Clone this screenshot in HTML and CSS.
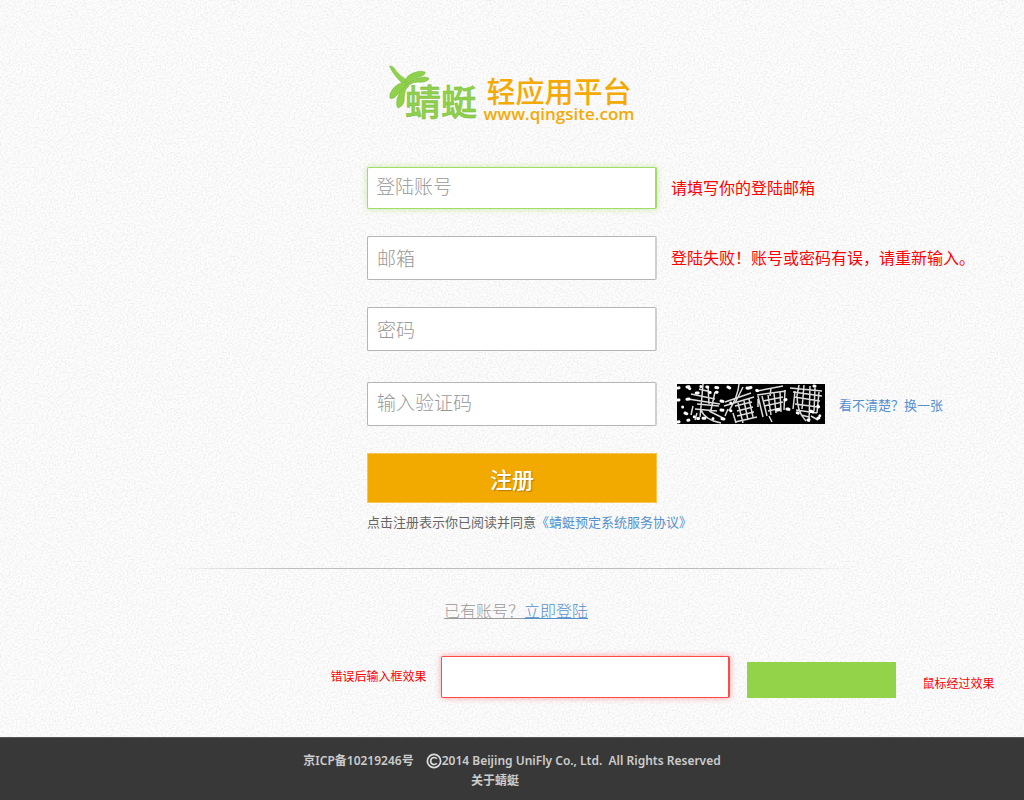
FILE: index.html
```html
<!DOCTYPE html>
<html lang="zh-CN">
<head>
<meta charset="utf-8">
<title>蜻蜓 轻应用平台 - 注册</title>
<link rel="stylesheet" href="styles.css">
</head>
<body>
<main class="page">
  <header class="brand">
    <svg class="dragonfly" viewBox="0 0 90 56" role="img" aria-label="蜻蜓">
      <g fill="#8fd14a" stroke="#78ba40" stroke-width=".6" stroke-linejoin="round">
        <path d="M.5 1Q3 .5 5 3Q10 11 18 15L20 19L16 21Q4 10 .5 1Z"/>
        <path d="M16 16Q18 10 24 8Q31 5 36 7Q37 9 33 11Q26 13 20 17Z"/>
        <path d="M19 18Q26 13 35 12Q40 12 40 14Q36 18 29 17Q24 17 20 20Z"/>
        <path d="M16 17Q8 18 3 25Q0 30 1 33Q4 35 8 30Q14 25 17 20Z"/>
        <path d="M18 19Q10 26 8 34Q7 41 9 43Q13 42 15 37Q15 31 16 27Q17 23 20 21Z"/>
      </g>
      <text class="brand-mark" x="16" y="51">蜻蜓</text>
    </svg>
    <div class="brand-text">
      <span class="brand-name">轻应用平台</span>
      <span class="brand-url">www.qingsite.com</span>
    </div>
  </header>

  <form class="form">
    <div class="row">
      <input class="field field-active" type="text" placeholder="登陆账号" aria-label="登陆账号">
      <p class="error">请填写你的登陆邮箱</p>
    </div>
    <div class="row">
      <input class="field" type="email" placeholder="邮箱" aria-label="邮箱">
      <p class="error">登陆失败！账号或密码有误，请重新输入。</p>
    </div>
    <div class="row">
      <input class="field" type="password" placeholder="密码" aria-label="密码">
    </div>
    <div class="row row-code">
      <input class="field" type="text" placeholder="输入验证码" aria-label="输入验证码">
      <div class="captcha">
        <svg class="captcha-image" viewBox="0 0 148 40" role="img" aria-label="验证码">
          <rect width="148" height="40" fill="#000"/>
          <g fill="none" stroke="#ddd" stroke-width="1.5">
            <path d="M26 0L25 12L23 33M31 2L32 20M14 10L38 15M11 15L43 20M20 20L42 22M18 25L40 27M22 5L34 8M24 26Q28 36 44 39M32 27L46 34M16 22L14 31M20 29L18 36M38 8L34 26"/>
            <path d="M62 0Q61 12 52 27M66 3L58 19M48 18L74 9M47 22L77 13M58 22L75 18M60 27L76 23M60 32L77 28M58 38L80 33M61 19L66 39M67 17L71 36M72 15L76 33M56 29L59 39M51 25L48 32"/>
            <path d="M80 7L106 2M80 11L109 7M81 12L86 33M85 12L90 32M91 11L94 31M97 9L99 29M103 8L104 28M108 6L107 26M86 17L106 13M87 22L106 18M91 27L104 24M94 4L93 12M81 15L81 23M92 32L95 38"/>
            <path d="M122 1L120 12Q120 28 129 37M127 1L125 25M133 2L132 38M138 4L137 27M142 8L140 29M116 8L145 12M117 13L143 17M118 20L141 23M119 26L140 29M118 7L116 25M113 4L145 7M124 31L132 33M134 32L141 36"/>
          </g>
          <g fill="none" stroke="#fff" stroke-width="3" stroke-linecap="round">
            <path stroke-dasharray="1 8 2 12 0 6" d="M1 4L18 2L44 4M1 16L13 15L7 22L2 26M12 4L18 9L47 8"/>
            <path stroke-dasharray="2 8 0 9" d="M8 29L20 34L50 35M44 17L54 19M44 26L56 27M51 3L58 7M72 4L79 2M100 26L118 24M134 27L147 34"/>
            <path stroke-dasharray="1 9" d="M70 4L82 7M108 16L116 13M111 25L126 31M137 2L146 4M1 38L24 34M131 36L147 33M141 22L146 29"/>
          </g>
        </svg>
        <a class="link captcha-link" href="#">看不清楚？换一张</a>
      </div>
    </div>
    <div class="row">
      <button class="submit" type="submit">注册</button>
    </div>
    <div class="row">
      <p class="terms">点击注册表示你已阅读并同意<a class="link" href="#">《蜻蜓预定系统服务协议》</a></p>
    </div>
  </form>

  <hr class="divider">

  <p class="login">已有账号？<a class="login-link" href="#">立即登陆</a></p>

  <section class="states">
    <label class="state-label" for="error-field">错误后输入框效果</label>
    <input class="field field-error" id="error-field" type="text">
    <button class="hover-swatch" type="button" aria-labelledby="hover-label"></button>
    <span class="state-label hover-label" id="hover-label">鼠标经过效果</span>
  </section>
</main>

<footer class="footer">
  <p class="footer-line"><span>京ICP备10219246号</span><span class="copyright"><svg class="copy-icon" viewBox="0 0 16 16" aria-hidden="true"><circle cx="8" cy="8" r="6.6"/><path d="M10.8 5.7A3.5 3.5 0 1 0 10.8 10.3"/></svg>2014 Beijing UniFly Co., Ltd.&nbsp; All Rights Reserved</span></p>
  <p class="footer-line footer-about"><a class="footer-link" href="#">关于蜻蜓</a></p>
</footer>
</body>
</html>
```
FILE: styles.css
```css
* {
  box-sizing: border-box;
}

body {
  display: flex;
  flex-direction: column;
  min-height: 100vh;
  margin: 0;
  overflow-x: hidden;
  background-color: #fdfdfd;
  background-image: url("data:image/svg+xml,%3Csvg xmlns='http://www.w3.org/2000/svg' width='256' height='256'%3E%3Cfilter id='n' x='0' y='0' width='100%25' height='100%25' color-interpolation-filters='sRGB'%3E%3CfeTurbulence type='fractalNoise' baseFrequency='.55' numOctaves='2' stitchTiles='stitch'/%3E%3CfeColorMatrix values='0 0 0 0 .5 0 0 0 0 .5 0 0 0 0 .5 .3 0 0 0 -.12'/%3E%3C/filter%3E%3Crect width='256' height='256' filter='url(%23n)'/%3E%3C/svg%3E");
  color: #666;
  font-family: "Liberation Sans", "Noto Sans CJK SC", sans-serif;
  font-size: 13px;
}

p {
  margin: 0;
}

.page {
  flex: 1;
  display: flex;
  flex-direction: column;
  padding-top: 65px;
}

.brand {
  display: flex;
  justify-content: center;
  gap: 4px;
  height: 63px;
}

.dragonfly {
  width: 90px;
  height: 56px;
  overflow: visible;
}

.brand-mark {
  fill: #8fd14a;
  stroke: #78ba40;
  stroke-width: 0.5px;
  font-family: "Noto Sans CJK SC", sans-serif;
  font-size: 36px;
  font-weight: 500;
}

.brand-text {
  display: flex;
  flex-direction: column;
  padding-top: 10px;
  color: #f3aa05;
  white-space: nowrap;
}

.brand-name {
  padding-left: 3px;
  font-family: "Noto Sans CJK SC", sans-serif;
  font-size: 29px;
  font-weight: 500;
  line-height: 30px;
}

.brand-url {
  font-family: "Open Sans", sans-serif;
  font-size: 17px;
  font-weight: 600;
  line-height: 18px;
}

.form {
  display: flex;
  flex-direction: column;
  gap: 27px;
  padding-top: 39px;
}

.row {
  display: grid;
  grid-template-columns: 1fr 290px 1fr;
  align-items: center;
}

.row > :first-child {
  grid-column: 2;
}

.row-code {
  margin-top: 4px;
}

.field {
  width: 100%;
  height: 44px;
  padding: 4px 9px 0;
  border: 1px solid #b5b5b5;
  border-right: 2px solid #cfcfcf;
  border-radius: 2px;
  background: #fff;
  color: #666;
  font-family: "Liberation Sans", "Noto Sans CJK SC", sans-serif;
  font-size: 19px;
  outline: none;
}

.field::placeholder {
  color: #999;
  font-weight: 300;
  opacity: 1;
}

.field-active {
  height: 42px;
  padding: 0 8px;
  border-color: #a2dc66;
  box-shadow: 0 0 6px rgba(146, 212, 74, 0.45);
}

.row-code .field {
  padding-top: 0;
}

.error {
  padding: 2px 0 0 14px;
  color: #f00;
  font-size: 16px;
  line-height: 24px;
  white-space: nowrap;
}

.captcha {
  display: flex;
  align-items: center;
  gap: 14px;
  padding-left: 20px;
}

.captcha-image {
  flex: none;
  width: 148px;
  height: 40px;
}

.captcha-link {
  white-space: nowrap;
}

.link {
  color: #5590ce;
  text-decoration: none;
}

.submit {
  height: 50px;
  border: 1px solid #fac450;
  background: #f3aa00;
  color: #fff;
  font-family: "Noto Sans CJK SC", sans-serif;
  font-size: 22px;
  font-weight: 500;
  line-height: 44px;
  text-shadow: 1px 1px 1px rgba(120, 80, 0, 0.5);
}

.submit:hover,
.hover-swatch {
  background: #92d349;
}

.terms {
  margin-top: -17px;
  line-height: 20px;
  white-space: nowrap;
}

.divider {
  width: 67%;
  height: 1px;
  margin: 35px auto 0;
  border: 0;
  background: linear-gradient(90deg, transparent, #bdbdbd 18%, #bdbdbd 82%, transparent);
}

.login {
  padding: 31px 0 0 8px;
  color: #999;
  font-size: 16px;
  font-weight: 300;
  line-height: 24px;
  text-align: center;
  text-decoration: underline;
}

.login-link {
  color: #5590ce;
}

.states {
  display: flex;
  align-items: center;
  justify-content: center;
  padding: 32px 0 39px 301px;
}

.state-label {
  flex: none;
  color: #f00;
  font-size: 12px;
  line-height: 16px;
}

.field-error {
  flex: none;
  width: 289px;
  height: 42px;
  margin: 0 17px 0 14px;
  border-color: #ff4a4a;
  box-shadow: 0 0 6px rgba(255, 40, 40, 0.4);
}

.hover-swatch {
  flex: none;
  width: 149px;
  height: 36px;
  margin-top: 6px;
  border: 0;
}

.hover-label {
  margin-left: 27px;
  padding-top: 14px;
}

.footer {
  padding: 13px 0 9px;
  border-top: 1px solid #555;
  background: #383838;
  color: #ccc;
  font-family: "Noto Sans", "Noto Sans CJK SC", sans-serif;
  font-size: 12px;
  font-weight: 600;
}

.footer-line {
  display: flex;
  justify-content: center;
  gap: 12px;
  line-height: 20px;
}

.copyright {
  display: flex;
  align-items: center;
}

.copy-icon {
  width: 16px;
  height: 16px;
  fill: none;
  stroke: #ddd;
  stroke-width: 1.7;
}

.footer-about {
  padding-right: 34px;
}

.footer-link {
  color: inherit;
  text-decoration: none;
}
```
